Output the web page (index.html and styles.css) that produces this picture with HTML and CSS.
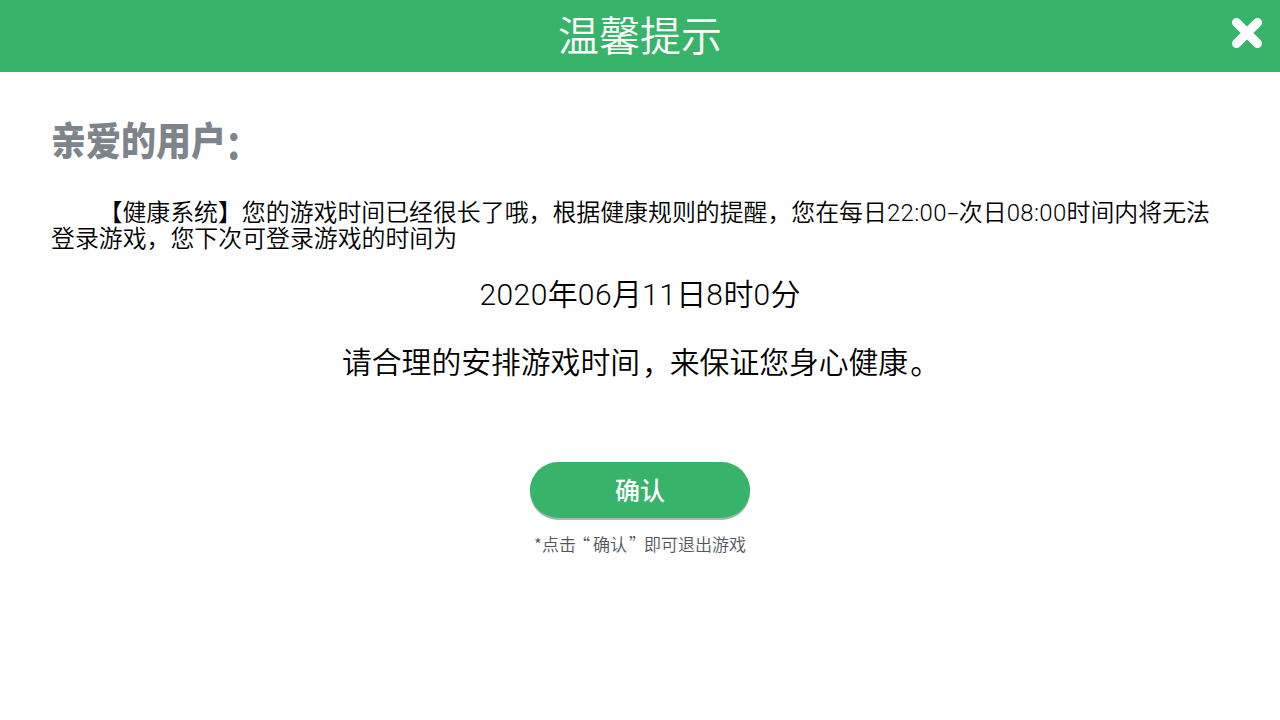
FILE: index.html
```html
<!DOCTYPE html>
<html lang="zh-CN">
<head>
<meta charset="utf-8">
<title>温馨提示</title>
<link rel="stylesheet" href="styles.css">
</head>
<body>
<header class="bar">
  <h1 class="title">温馨提示</h1>
  <button class="close" aria-label="关闭"><svg width="32" height="32" viewBox="0 0 32 32"><path d="M5.500 5.500L26.500 26.500M26.500 5.500L5.500 26.500" stroke="#fff" stroke-width="9" stroke-linecap="round"/></svg></button>
</header>
<main class="content">
  <h2 class="greeting">亲爱的用户<span class="colon">：</span></h2>
  <p class="notice">【健康系统】您的游戏时间已经很长了哦，根据健康规则的提醒，您在每日<span class="num">22:00</span><span class="dash">-</span>次日<span class="num">08:00</span>时间内将无法<br>登录游戏，您下次可登录游戏的时间为</p>
  <p class="date"><span class="num">2020</span>年<span class="num">06</span>月<span class="num">11</span>日<span class="num">8</span>时<span class="num">0</span>分</p>
  <p class="advice">请合理的安排游戏时间<span class="comma">，</span>来保证您身心健康<span class="stop">。</span></p>
  <button class="confirm">确认</button>
  <p class="hint">*点击<span class="open">“</span>确认<span class="shut">”</span>即可退出游戏</p>
</main>
</body>
</html>
```

FILE: styles.css
```css
* { box-sizing: border-box; }
body { margin: 0; background: #fff; color: #000; font-family: "Noto Sans CJK SC", sans-serif; font-weight: 350; }
h1, h2, p { margin: 0; }
button { border: 0; padding: 0; font-family: inherit; }
.bar { height: 72px; background: #38b36a; display: grid; grid-template-columns: 80px 1fr 80px; align-items: center; }
.title { grid-column: 2; text-align: center; color: #fff; font-size: 41px; font-weight: 350; line-height: 67px; height: 72px; }
.close { background: none; width: 32px; height: 32px; justify-self: end; margin: 0 17px 6px 0; }
.close svg { display: block; }
.content { display: flex; flex-direction: column; align-items: center; padding: 48px 51px 0; }
.greeting { align-self: flex-start; font-size: 35px; line-height: 44px; height: 44px; font-weight: 900; color: #7e848c; transform: scaleY(1.1) translateY(-3px); }
.colon { position: relative; left: -1px; top: 3px; }
.num { font-family: Roboto, sans-serif; font-weight: 350; line-height: 0; letter-spacing: .016em; }
.dash { display: inline-block; width: 12px; line-height: 0; text-indent: 0; text-align: center; font-family: Roboto, sans-serif; font-weight: 300; transform: scaleX(1.7); }
.notice { align-self: flex-start; width: 1178px; height: 52px; margin-top: 34px; font-size: 23.900px; line-height: 26px; text-indent: 47.500px; white-space: nowrap; }
.date { font-size: 30px; line-height: 40px; height: 40px; margin-top: 22px; }
.advice { font-size: 29.800px; line-height: 40px; height: 40px; margin-top: 28px; }
.comma, .stop { position: relative; left: 2px; top: 1px; }
.confirm { width: 220px; height: 56px; margin-top: 82px; border-radius: 28px; background: #38b36a; color: #fff; font-size: 25px; font-weight: 500; padding-bottom: 2px; box-shadow: 0 2px 0 #a5b9ad; }
.hint { font-size: 17px; line-height: 24px; margin-top: 14px; color: #505660; }
.open { position: relative; left: -3px; }
.shut { position: relative; left: 2px; }
```
